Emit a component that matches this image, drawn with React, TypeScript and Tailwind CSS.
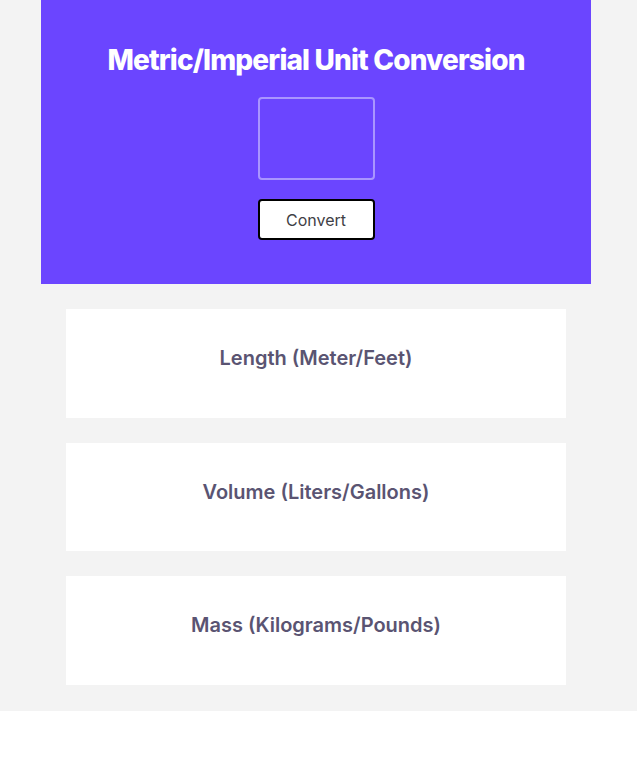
import React from 'react';

const UNITS = ['Length (Meter/Feet)', 'Volume (Liters/Gallons)', 'Mass (Kilograms/Pounds)'];

export default function App() {
  return (
    <div className="font-['Inter',sans-serif]">
      <div className="bg-[#f3f3f3] pb-[26.5px]">
        <div className="w-[632px] flex flex-col items-center">
          <header className="w-[550px] bg-[#6b45ff] flex flex-col items-center pt-[40px] pb-[44px]">
            <h1 className="text-white text-[28px] leading-[40px] font-extrabold tracking-[-0.03em]">
              Metric/Imperial Unit Conversion
            </h1>
            <input
              type="text"
              className="mt-[17px] w-[117px] h-[83px] rounded-[4px] border-2 border-[#a995ff] bg-transparent outline-none"
            />
            <button className="mt-[19px] w-[117px] h-[41px] rounded-[4px] border-2 border-black bg-white text-[16px] text-[#3f3f46]">
              Convert
            </button>
          </header>
          <div className="flex flex-col gap-[25px] mt-[25px]">
            {UNITS.map((label) => (
              <div key={label} className="w-[500px] h-[108.5px] bg-white pt-[35px] text-center">
                <h2 className="text-[20px] leading-[28px] font-semibold text-[#5a5472]">{label}</h2>
              </div>
            ))}
          </div>
        </div>
      </div>
    </div>
  );
}
